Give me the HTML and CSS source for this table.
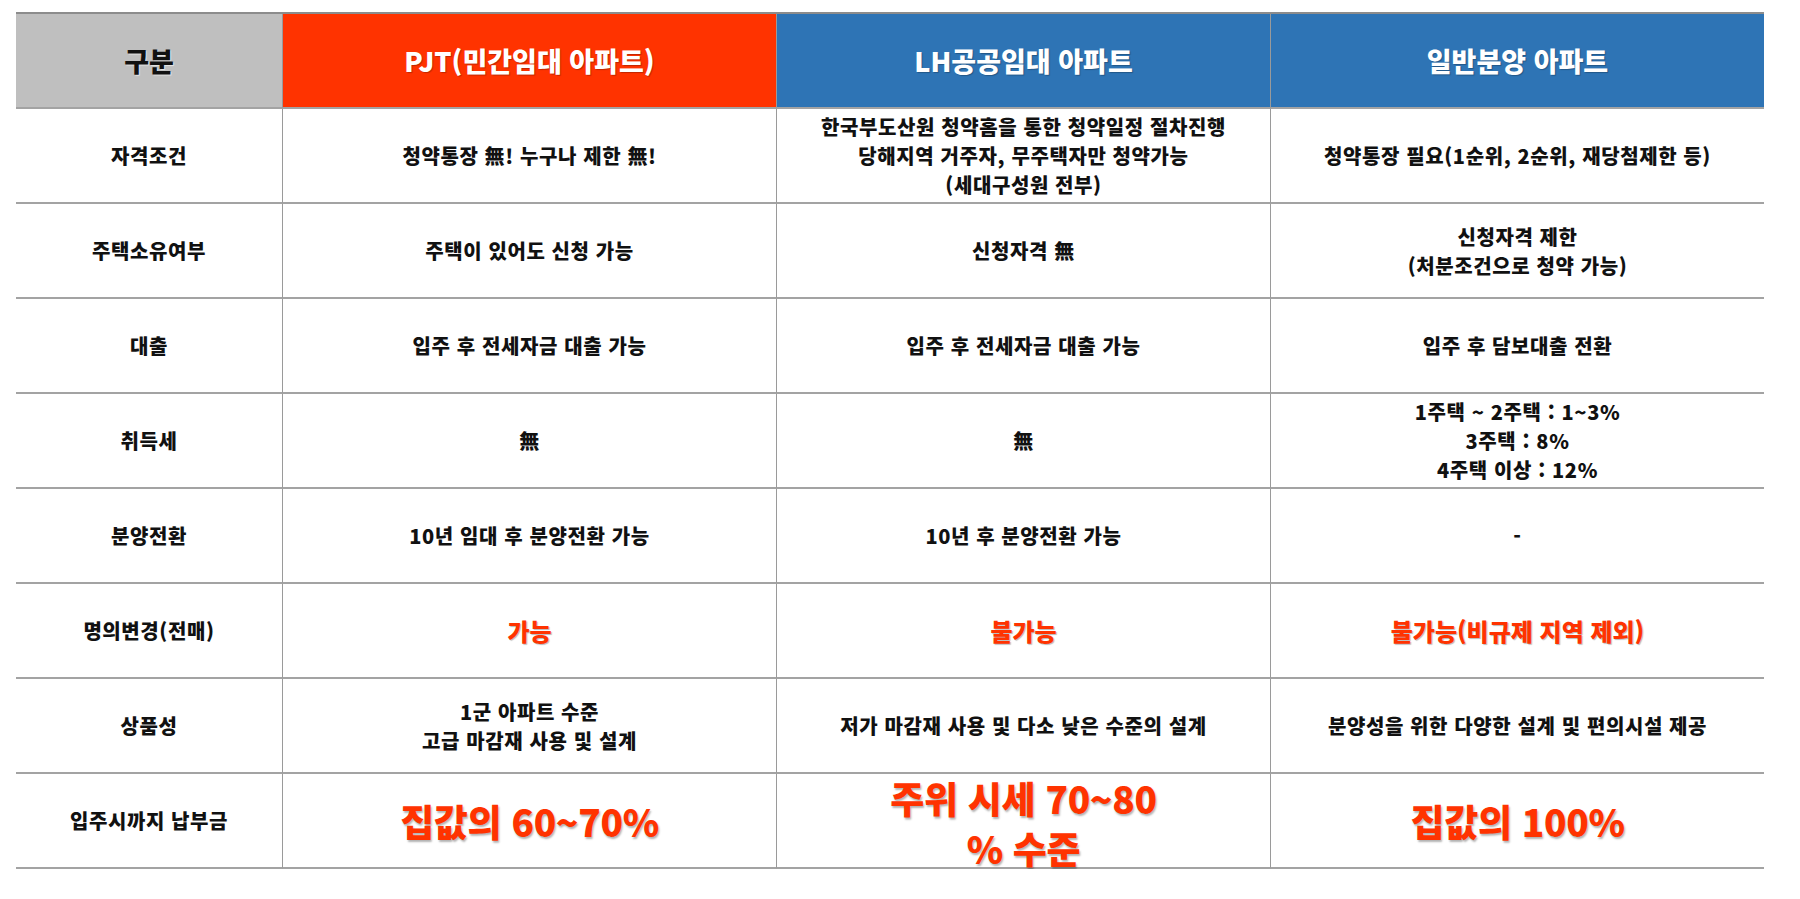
FILE: index.html
```html
<!DOCTYPE html>
<html lang="ko">
<head>
<meta charset="utf-8">
<title>PJT 비교표</title>
<link rel="stylesheet" href="styles.css">
</head>
<body>
<table class="compare">
  <colgroup>
    <col class="c-label">
    <col class="c-main">
    <col class="c-main">
    <col class="c-last">
  </colgroup>
  <thead>
    <tr>
      <th class="h-gray">구분</th>
      <th class="h-red">PJT(민간임대 아파트)</th>
      <th class="h-blue">LH공공임대 아파트</th>
      <th class="h-blue">일반분양 아파트</th>
    </tr>
  </thead>
  <tbody>
    <tr>
      <td class="label">자격조건</td>
      <td>청약통장 無! 누구나 제한 無!</td>
      <td>한국부도산원 청약홈을 통한 청약일정 절차진행<br>당해지역 거주자, 무주택자만 청약가능<br>(세대구성원 전부)</td>
      <td>청약통장 필요(1순위, 2순위, 재당첨제한 등)</td>
    </tr>
    <tr>
      <td class="label">주택소유여부</td>
      <td>주택이 있어도 신청 가능</td>
      <td>신청자격 無</td>
      <td>신청자격 제한<br>(처분조건으로 청약 가능)</td>
    </tr>
    <tr>
      <td class="label">대출</td>
      <td>입주 후 전세자금 대출 가능</td>
      <td>입주 후 전세자금 대출 가능</td>
      <td>입주 후 담보대출 전환</td>
    </tr>
    <tr>
      <td class="label">취득세</td>
      <td>無</td>
      <td>無</td>
      <td>1주택 ~ 2주택 : 1~3%<br>3주택 : 8%<br>4주택 이상 : 12%</td>
    </tr>
    <tr>
      <td class="label">분양전환</td>
      <td>10년 임대 후 분양전환 가능</td>
      <td>10년 후 분양전환 가능</td>
      <td>-</td>
    </tr>
    <tr>
      <td class="label">명의변경(전매)</td>
      <td class="red">가능</td>
      <td class="red">불가능</td>
      <td class="red">불가능(비규제 지역 제외)</td>
    </tr>
    <tr>
      <td class="label">상품성</td>
      <td>1군 아파트 수준<br>고급 마감재 사용 및 설계</td>
      <td>저가 마감재 사용 및 다소 낮은 수준의 설계</td>
      <td>분양성을 위한 다양한 설계 및 편의시설 제공</td>
    </tr>
    <tr>
      <td class="label">입주시까지 납부금</td>
      <td class="big"><div class="big-box">집값의 60~70%</div></td>
      <td class="big"><div class="big-box"><span class="ln">주위 시세 70~80</span><span class="ln">% 수준</span></div></td>
      <td class="big"><div class="big-box">집값의 100%</div></td>
    </tr>
  </tbody>
</table>
</body>
</html>
```

FILE: styles.css
```css
html, body {
  margin: 0;
  padding: 0;
  background: #ffffff;
}

body {
  padding: 12px 0 0 16px;
  font-family: "Noto Sans CJK KR", "Noto Sans", sans-serif;
  color: #111111;
}

.compare {
  width: 1748px;
  table-layout: fixed;
  border-collapse: separate;
  border-spacing: 0;
  border-top: 2px solid #8c8c8c;
}

.c-label { width: 267px; }
.c-main { width: 494px; }
.c-last { width: 493px; }

.compare th,
.compare td {
  height: 93px;
  padding: 0;
  text-align: center;
  vertical-align: middle;
  border-bottom: 2px solid #a3a3a3;
  border-right: 1px solid #9a9a9a;
  font-weight: 900;
}

.compare th:last-child,
.compare td:last-child {
  border-right: none;
}

.compare th {
  font-size: 27px;
  letter-spacing: 0;
  color: #ffffff;
  text-shadow: 1px 1px 1px rgba(0, 0, 0, 0.25);
}

.h-gray {
  background: #bfbfbf;
  color: #111111 !important;
  text-shadow: 1px 1px 1px rgba(255, 255, 255, 0.6) !important;
}

.h-red { background: #ff3300; }
.h-blue { background: #2e74b5; }

.compare td {
  font-size: 20px;
  line-height: 29px;
  letter-spacing: 0.6px;
}

.compare td.red {
  color: #ff3300;
  font-size: 24px;
  letter-spacing: 0;
  text-shadow: 1px 1px 1px rgba(0, 0, 0, 0.28);
}

.compare td.big {
  color: #ff3300;
  font-size: 37px;
  line-height: 54px;
  letter-spacing: -0.3px;
  text-shadow: 1px 2px 2px rgba(0, 0, 0, 0.3);
}

.big-box {
  height: 93px;
  display: flex;
  flex-direction: column;
  align-items: center;
  justify-content: center;
}

.ln {
  display: block;
  height: 50px;
  line-height: 54px;
}
```
